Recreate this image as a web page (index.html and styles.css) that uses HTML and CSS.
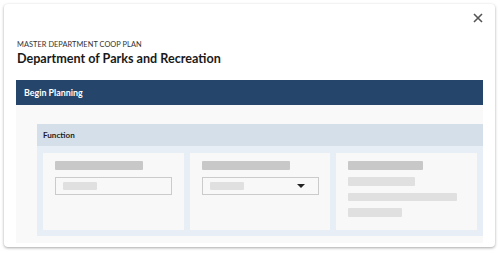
FILE: index.html
```html
<html>
    <head>
        <link rel="stylesheet" href="styles.css">
    </head>
    <body>
        <div class="page">
            <div class="modal">
                <button class="close" aria-label="close">
                    <svg width="10" height="10" viewBox="0 0 10 10">
                        <path d="M1 1 L9 9 M9 1 L1 9" stroke="#555" stroke-width="1.6" fill="none"/>
                    </svg>
                </button>
                <div class="titles">
                    <div class="eyebrow">MASTER DEPARTMENT COOP PLAN</div>
                    <h1>Department of Parks and Recreation</h1>
                </div>
                <div class="band">Begin Planning</div>
                <div class="panel">
                    <div class="section">
                        <div class="section-head">Function</div>
                        <div class="section-body">
                            <div class="tile">
                                <div class="bar label"></div>
                                <div class="field">
                                    <div class="bar hint"></div>
                                </div>
                            </div>
                            <div class="tile">
                                <div class="bar label"></div>
                                <div class="field">
                                    <div class="bar hint"></div>
                                    <span class="caret"></span>
                                </div>
                            </div>
                            <div class="tile">
                                <div class="bar label short"></div>
                                <div class="bar line l1"></div>
                                <div class="bar line l2"></div>
                                <div class="bar line l3"></div>
                            </div>
                        </div>
                    </div>
                </div>
            </div>
        </div>
    </body>
</html>
```

FILE: styles.css
```css
body {
    margin: 0;
    background: #ffffff;
    font-family: Lato, "Noto Sans", Arial, sans-serif;
    color: #222;
}

.page {
    padding: 4px;
}

.modal {
    position: relative;
    width: 491px;
    height: 243px;
    box-sizing: border-box;
    padding: 0 12px 4px 12px;
    background: #fff;
    border-radius: 4px;
    box-shadow: 0 1px 3px rgba(0, 0, 0, 0.35);
    display: flex;
    flex-direction: column;
    overflow: hidden;
}

.close {
    position: absolute;
    top: 9px;
    right: 12px;
    background: none;
    border: none;
    padding: 0;
    width: 10px;
    height: 10px;
    cursor: pointer;
}

.close svg {
    display: block;
}

.titles {
    padding: 35px 0 0 1px;
}

.eyebrow {
    font-size: 7.4px;
    line-height: 11px;
    letter-spacing: 0.05px;
    color: #333;
}

h1 {
    margin: 0;
    font-size: 12.6px;
    line-height: 18px;
    font-weight: 700;
    color: #1a1a1a;
}

.band {
    margin-top: 11.5px;
    height: 25px;
    flex-shrink: 0;
    line-height: 25px;
    padding: 0 8px;
    background: #25466a;
    color: #fff;
    font-size: 8.9px;
    font-weight: 700;
}

.panel {
    flex: 1;
    background: #f9f9f9;
    padding: 19px 0 7px 21px;
    overflow: hidden;
}

.section {
    width: 446px;
}

.section-head {
    height: 22px;
    line-height: 22px;
    padding-left: 6px;
    background: #d5dfea;
    font-size: 8.1px;
    font-weight: 700;
    color: #1e1e1e;
}

.section-body {
    background: #e8eef5;
    padding: 7px 6px 6px 6px;
    display: grid;
    grid-template-columns: 141px 140px 141px;
    gap: 6px;
}

.tile {
    height: 77px;
    box-sizing: border-box;
    background: #f8f8f8;
    padding: 8px 12px;
}

.bar {
    height: 9px;
    border-radius: 1px;
}

.label {
    width: 88px;
    background: #c8c8c8;
    margin-bottom: 7px;
}

.label.short {
    width: 75px;
}

.field {
    width: 117px;
    height: 18px;
    box-sizing: border-box;
    border: 1px solid #cbcbcb;
    padding: 4px 7px;
    display: flex;
    align-items: center;
    justify-content: space-between;
}

.hint {
    width: 34px;
    height: 8px;
    background: #e0e0e0;
}

.caret {
    width: 0;
    height: 0;
    border-left: 4px solid transparent;
    border-right: 4px solid transparent;
    border-top: 4px solid #222;
    margin-right: 6px;
}

.line {
    background: #e0e0e0;
    margin-bottom: 7px;
}

.l1 { width: 67px; }
.l2 { width: 109px; height: 8px; }
.l3 { width: 54px; }
```
